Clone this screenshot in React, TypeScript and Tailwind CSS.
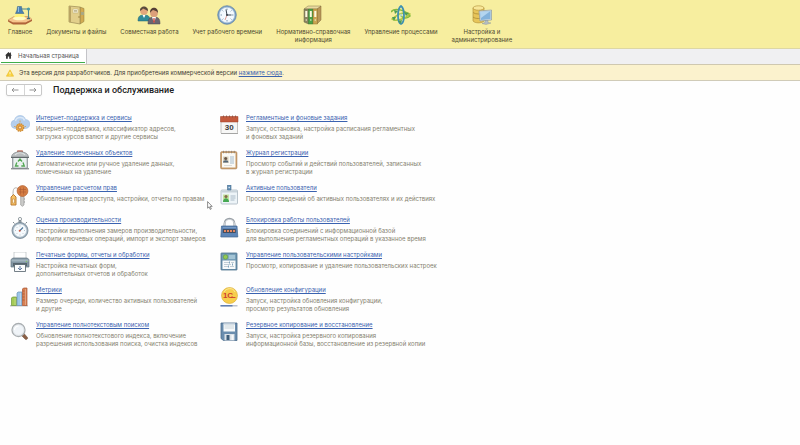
import type { ReactNode } from 'react';

const LampIcon = () => (
  <svg viewBox="0 0 24 20" className="h-5 w-6" aria-hidden="true">
    <path d="M0 15l6-3.500h15l3 3-6.500 3.500H5z" fill="#f6c58c" stroke="#b8794a" strokeWidth=".5" />
    <path d="M0 15l5 2.500h12.500l6.500-3v1.500l-6.500 3.500H5L0 16.500z" fill="#b0643a" />
    <path d="M9 8l-4 5.500h13L14 8z" fill="#fff27a" />
    <ellipse cx="11.500" cy="13.500" rx="6.500" ry="1.700" fill="#fffbc4" />
    <path d="M12 4h8.500v9" fill="none" stroke="#4c8490" strokeWidth="1.100" />
    <path d="M19 13.500h3" stroke="#4c7078" strokeWidth="1.400" />
    <circle cx="20.500" cy="4" r="1.600" fill="#4c9aa5" />
    <path d="M9.500 1.500h4L14 5l2 3.500H7.500L9 5z" fill="#4b82b3" stroke="#346189" strokeWidth=".5" />
    <path d="M10.500 2v5" stroke="#9cc4e4" strokeWidth=".9" />
  </svg>
);

const BookIcon = () => (
  <svg viewBox="0 0 20 20" className="size-5" aria-hidden="true">
    <path d="M14 2l4 1.500v13L14 19z" fill="#d2ab52" stroke="#8d7a3c" strokeWidth=".5" />
    <path d="M3 1l11 1v17L3 17z" fill="#e2cf8b" stroke="#9b8a54" strokeWidth=".7" />
    <path d="M3 1l2 .2v16L3 17z" fill="#b9a463" />
    <rect x="7" y="4" width="5" height="4" fill="#f8f3d8" stroke="#b5a56d" strokeWidth=".4" />
    <path d="M8 5.500h3M8 6.700h3" stroke="#8c8157" strokeWidth=".5" />
    <path d="M15 7h3v3h-3z" fill="#a9a882" />
    <circle cx="13" cy="12" r=".7" fill="#8c7330" />
  </svg>
);

const PeopleIcon = () => (
  <svg viewBox="0 0 24 20" className="h-5 w-6" aria-hidden="true">
    <path d="M1 16c0-5 2-6 6-6s6 1 6 6z" fill="#318b98" stroke="#206373" strokeWidth=".5" />
    <path d="M5.500 10L7 13l1.500-3z" fill="#fff" />
    <circle cx="7" cy="6" r="3.800" fill="#e3a77c" />
    <path d="M3 6c-.5-6 8.500-6 8 0C9 5 7 4 6 3.500 5 5 4 5 3 6z" fill="#5a4a3c" />
    <path d="M11 19c0-6 2-7 6-7s6 1 6 7z" fill="#6b6670" stroke="#494751" strokeWidth=".5" />
    <path d="M15 12l2 6 2-6z" fill="#fff" />
    <path d="M16.500 13h1l.4 4-.9 1-.9-1z" fill="#c43e35" />
    <circle cx="17" cy="8" r="3.900" fill="#dca07a" />
    <path d="M13 8c-.5-7 8.500-7 8 0-1-2-3-2.500-5-3-1 1-2 1-3 3z" fill="#553f35" />
  </svg>
);

const ClockIcon = () => (
  <svg viewBox="0 0 20 20" className="size-5" aria-hidden="true">
    <circle cx="10" cy="10" r="9.300" fill="#7ba1c5" stroke="#5d7fa5" strokeWidth=".7" />
    <circle cx="10" cy="10" r="7.700" fill="#f4faff" stroke="#a6c0d7" strokeWidth=".6" />
    <path d="M10 3.500v1.500M10 15v1.500M3.500 10H5M15 10h1.500M5.500 5.500l.8.8M14.500 5.500l-.8.8M5.500 14.500l.8-.8M14.500 14.500l-.8-.8" stroke="#62809b" strokeWidth=".8" />
    <path d="M9 4.500l1 5.500h4.500" fill="none" stroke="#39434e" strokeWidth="1" />
    <path d="M10 10l-2 5" stroke="#ce5a45" strokeWidth=".6" />
    <circle cx="10" cy="10" r="1" fill="#39434e" />
  </svg>
);

const BindersIcon = () => (
  <svg viewBox="0 0 20 20" className="size-5" aria-hidden="true">
    <path d="M1 4l4-3h13l-3 3z" fill="#e9d9a0" stroke="#877a4f" strokeWidth=".5" />
    <path d="M14 4l4-3v14l-4 4z" fill="#b99757" stroke="#80673a" strokeWidth=".5" />
    <path d="M1 4h4.500v15L1 17z" fill="#8b8560" stroke="#666146" strokeWidth=".5" />
    <path d="M5.500 4H10v15H5.500z" fill="#4ba246" stroke="#34732f" strokeWidth=".5" />
    <path d="M10 4h4.500v15H10z" fill="#cba552" stroke="#8d7132" strokeWidth=".5" />
    <path d="M2.300 6h2v6h-2zM6.800 6h2v6h-2zM11.300 6h2v6h-2z" fill="#fdf9e0" />
    <circle cx="3.300" cy="15" r=".8" fill="#ece9cd" />
    <circle cx="7.800" cy="15" r=".8" fill="#ece9cd" />
    <circle cx="12.300" cy="15" r=".8" fill="#ece9cd" />
  </svg>
);

const ProcessIcon = () => (
  <svg viewBox="0 0 20 20" className="size-5" fill="none" aria-hidden="true">
    <path d="M0 7c3-5 15-2 19 4-3 3-7 2-9 0" stroke="#83b93e" strokeWidth="1.500" />
    <path d="M1 14c3 3 13 0 18-5-5-3-12 0-18 5z" stroke="#a9c53d" strokeWidth="1.400" />
    <path d="M10 19c-4-2-4-15 0-18 4 3 4 16 0 18z" stroke="#3f91b2" strokeWidth="1.800" />
    <path d="M3 5l4 1-3 3zM13 7l5 1-3 3zM7 16l3 3 1-4zM1 12l4 0-2 4z" fill="#4d9d55" />
    <circle cx="10" cy="10" r="1.500" fill="#b4d7c0" />
  </svg>
);

const AdminIcon = () => (
  <svg viewBox="0 0 20 20" className="size-5" aria-hidden="true">
    <path d="M1 3v13c2 2.500 9 2.500 11 0V3z" fill="#e7c55a" stroke="#ac8c35" strokeWidth=".6" />
    <path d="M1 7.500c2 2 9 2 11 0M1 12c2 2 9 2 11 0" fill="none" stroke="#a5852e" strokeWidth=".7" />
    <ellipse cx="6.500" cy="3" rx="5.500" ry="2.200" fill="#f8e798" stroke="#ac8c35" strokeWidth=".6" />
    <path d="M7 6l12.500-1v10L8 16z" fill="#d2dce2" stroke="#7f909d" strokeWidth=".6" />
    <path d="M8 7l10.500-1v8L9 15z" fill="#83b2db" />
    <path d="M8 7l10.500-1L9 13z" fill="#b4d5ef" />
    <path d="M13 15.500h3v2l3 .5-5 1.500-4-1 3-1z" fill="#b5bec4" stroke="#818e96" strokeWidth=".4" />
  </svg>
);

const CloudIcon = () => (
  <svg viewBox="0 0 20 20" className="size-5" aria-hidden="true">
    <path d="M5 13.500a4.300 4.300 0 01-.5-8.500c1-6 10-6 11-.5a4.500 4.500 0 010 9z" fill="#b5cfed" stroke="#9dbadd" strokeWidth=".5" />
    <path d="M5.500 6c1-4.500 8-4.500 9-.5" fill="none" stroke="#dbe8f7" strokeWidth="1.400" />
    <circle cx="10" cy="12.500" r="3.700" fill="#f0ad47" stroke="#c98a3a" strokeWidth="1.300" strokeDasharray="1.500 .7" />
    <circle cx="10" cy="12.500" r="1.600" fill="#f8dfac" stroke="#b76a2b" strokeWidth=".8" />
    <path d="M10 7.500v-2M5.500 11.500H4M14.500 11.500H16" stroke="#d9a04a" strokeWidth=".8" />
  </svg>
);

const TrashIcon = () => (
  <svg viewBox="0 0 20 20" className="size-5" aria-hidden="true">
    <path d="M7.500 2V.8h5V2" fill="#cb7961" stroke="#a94f39" strokeWidth=".7" />
    <path d="M1.500 7c0-7 17-7 17 0z" fill="#b9bdbf" stroke="#787f83" strokeWidth=".6" />
    <path d="M5 5c2-3 8-3 10 0" fill="none" stroke="#e1e4e5" strokeWidth="1.200" />
    <path d="M3 7.500h14V18H3z" fill="#eaf1f0" stroke="#8b9296" strokeWidth=".6" />
    <path d="M1 7.500h18M1 18.800h18" stroke="#62696d" strokeWidth="1" />
    <path d="M2.500 8v10M17.500 8v10" stroke="#9aa2a6" strokeWidth="1" />
    <path d="M8 11.500L10 9l2 2.500M13 12.500l1.300 3.500h-3M6.800 12.500L5.500 16h3" fill="none" stroke="#52a653" strokeWidth="1.300" />
  </svg>
);

const KeyIcon = () => (
  <svg viewBox="0 0 20 22" className="h-[22px] w-5" aria-hidden="true">
    <path d="M10.700 11h3.300v9l-1.600 1.300L10.700 20z" fill="#cbcbc9" stroke="#8e8f8d" strokeWidth=".6" />
    <path d="M14 14h1M14 17h1" stroke="#8e8f8d" strokeWidth="1" />
    <path d="M8 3.500C3 1 3 6 3 10" fill="none" stroke="#a6a19a" strokeWidth=".8" />
    <circle cx="12.500" cy="6" r="5.400" fill="#d47d43" stroke="#b5602f" strokeWidth=".7" />
    <path d="M9 4.500h7M9 7h7M10.500 2.500v7M13.500 2.500v7" stroke="#ac5b30" strokeWidth=".6" />
    <path d="M1 12l2.500-2.500L6 12v8H1z" fill="#f5c268" stroke="#b77528" strokeWidth=".9" />
    <path d="M2.500 14h2v4h-2z" fill="#fff5db" stroke="#b77528" strokeWidth=".5" />
  </svg>
);

const StopwatchIcon = () => (
  <svg viewBox="0 0 20 22" className="h-[22px] w-5" aria-hidden="true">
    <circle cx="10" cy="2" r="1.600" fill="none" stroke="#8c969c" strokeWidth=".9" />
    <path d="M9 3.500h2V6H9zM3 5l1.500 1.500M17 5l-1.500 1.500" fill="#9ba6ae" stroke="#7e898f" strokeWidth="1" />
    <circle cx="10" cy="13.500" r="8" fill="#a0b2c0" stroke="#70818f" strokeWidth=".8" />
    <circle cx="10" cy="13.500" r="6.500" fill="#f6fafd" stroke="#b8c6d0" strokeWidth=".5" />
    <path d="M10 8.500v1M10 17.500v1M5 13.500h1M14 13.500h1M6.500 10l.7.7M6.500 17l.7-.7M13.500 17l-.7-.7" stroke="#879ca9" strokeWidth=".6" />
    <path d="M9.500 14l3.500-3.500" stroke="#4a7499" strokeWidth="1.100" />
    <circle cx="9.700" cy="13.800" r="1" fill="#d05a42" />
  </svg>
);

const PrinterIcon = () => (
  <svg viewBox="0 0 20 20" className="size-5" aria-hidden="true">
    <path d="M4 0h12v8H4z" fill="#fff" stroke="#adb2b6" strokeWidth=".6" />
    <path d="M1 7.500L3 6h14l2 1.500V15H1z" fill="#8497a5" stroke="#647581" strokeWidth=".7" />
    <path d="M1.500 7.500h17v2h-17z" fill="#a3b4bf" />
    <path d="M3 11h14v3H3z" fill="#56646e" />
    <path d="M4.500 12.500h11v7h-11z" fill="#fbfcfd" stroke="#52606a" strokeWidth=".8" />
    <path d="M10 14v4M8 16l2 2 2-2" fill="none" stroke="#607aa1" strokeWidth="1" />
    <circle cx="16.500" cy="9.500" r=".7" fill="#84c767" />
  </svg>
);

const MetricsIcon = () => (
  <svg viewBox="0 0 20 20" className="size-5" aria-hidden="true">
    <path d="M0 18.800h18" stroke="#a5a6a6" strokeWidth="1" />
    <path d="M1.500 11l1-1h4v8.500h-5z" fill="#a4ca54" stroke="#6e9639" strokeWidth=".7" />
    <path d="M7 6l1-1h4v13.500H7z" fill="#9dc6e7" stroke="#6b92b5" strokeWidth=".7" />
    <path d="M12.500 2l1-1H17v17.500h-4.500z" fill="#d77f51" stroke="#aa5635" strokeWidth=".7" />
    <path d="M5 11v7M10.500 6v12M15.500 2v16" stroke="#fff" strokeOpacity=".35" strokeWidth=".8" />
    <path d="M12.500 4h2M12.500 7h2M12.500 10h2M12.500 13h2" stroke="#9b4b2d" strokeWidth=".6" />
  </svg>
);

const SearchIcon = () => (
  <svg viewBox="0 0 20 20" className="size-5" aria-hidden="true">
    <path d="M12 12.500l2-1 3.500 4c.8 1-1.200 2.800-2.200 1.800L12 14z" fill="#8a5f45" stroke="#644431" strokeWidth=".5" />
    <circle cx="8.500" cy="8" r="6.500" fill="#f0f4f8" stroke="#a9aeb1" strokeWidth="1.300" />
    <path d="M4.500 8c0-2.500 2-4 4-4" fill="none" stroke="#fff" strokeWidth="1.300" />
    <circle cx="8.500" cy="8" r="5.300" fill="none" stroke="#d2d9dc" strokeWidth=".5" />
  </svg>
);

const CalendarIcon = () => (
  <svg viewBox="0 0 20 20" className="size-5" aria-hidden="true">
    <rect x="1" y="2" width="16.500" height="16.500" rx=".8" fill="#f7f7f6" stroke="#b7b5b1" strokeWidth=".8" />
    <path d="M.5 1.500h17.500v5.500H.5z" fill="#c45a3d" stroke="#a34329" strokeWidth=".5" />
    <path d="M3.500 .5v2M6.500 .5v2M9.500 .5v2M12.500 .5v2M15.500 .5v2" stroke="#8d4b3b" strokeWidth=".8" />
    <text x="9.200" y="15" textAnchor="middle" fontSize="8" fontWeight="700" fill="#3c3c3c" className="font-['Liberation_Sans',sans-serif]">30</text>
    <path d="M1 18.500h17" stroke="#a1a1a0" strokeWidth=".9" />
  </svg>
);

const JournalIcon = () => (
  <svg viewBox="0 0 20 20" className="size-5" aria-hidden="true">
    <rect x=".5" y="1.500" width="16.500" height="17.500" rx="1.500" fill="#c99e6c" stroke="#a97f54" strokeWidth=".5" />
    <path d="M2 3h13.500v14.500H2z" fill="#faf9f5" />
    <path d="M3.500 .8v2.500M6.200 .8v2.500M8.900 .8v2.500M11.600 .8v2.500M14.300 .8v2.500" stroke="#8b7c6d" strokeWidth=".8" />
    <path d="M3 6.500h5.500v6.500H3z" fill="#d8d1bd" />
    <circle cx="5.700" cy="8.500" r="1.500" fill="#695648" />
    <path d="M3 12.500c0-3 5.500-3 5.500 0z" fill="#536577" />
    <path d="M10 7h4M10 9h4M10 11h4M10 13h4" stroke="#9bb3c9" strokeWidth=".9" />
    <path d="M4 15.500h8" stroke="#c9c8c3" strokeWidth=".6" />
  </svg>
);

const BadgeIcon = () => (
  <svg viewBox="0 0 20 20" className="size-5" aria-hidden="true">
    <rect x="1" y="5" width="16.500" height="14" rx="1" fill="#edf4f8" stroke="#a9b6c0" strokeWidth=".8" />
    <path d="M1.500 5.500h15.500v2H1.500z" fill="#c8d3da" />
    <path d="M7.500 0h3.500v5H7.500z" fill="#6792b9" stroke="#456b8c" strokeWidth=".6" />
    <circle cx="9.200" cy="2.500" r=".8" fill="#d9e8f4" />
    <path d="M3 9.500h6V17H3z" fill="#c6e4a0" />
    <circle cx="6" cy="11.500" r="1.600" fill="#836c4b" />
    <path d="M3 17c0-5 6-5 6 0z" fill="#45a853" />
    <path d="M10.500 11h5M10.500 13h5M10.500 15h4" stroke="#9aacba" strokeWidth=".8" />
  </svg>
);

const LockIcon = () => (
  <svg viewBox="0 0 20 22" className="h-[22px] w-5" aria-hidden="true">
    <path d="M4.500 10V7c0-7 10-7 10 0v3" fill="none" stroke="#9aa1a7" strokeWidth="2" />
    <path d="M4.500 9V7c0-6 10-6 10 0v2" fill="none" stroke="#dde0e3" strokeWidth=".8" />
    <path d="M1.500 9h15.500l.8 11H.8z" fill="#5c84b6" stroke="#41658f" strokeWidth=".7" />
    <path d="M3 10.500h13" stroke="#7ea1c9" strokeWidth=".8" />
    <rect x="2.800" y="12" width="13" height="4" rx=".5" fill="#454f60" />
    <path d="M4 13h2v2H4zM7 13h2v2H7zM10 13h2v2h-2zM13 13h2v2h-2z" fill="#e38762" />
  </svg>
);

const SettingsIcon = () => (
  <svg viewBox="0 0 20 20" className="size-5" aria-hidden="true">
    <rect x="1" y="1" width="16" height="17" rx=".5" fill="#6b92ae" stroke="#527690" strokeWidth=".8" />
    <path d="M2.500 2.500H15.500v5H2.500z" fill="#82acc2" />
    <circle cx="5.500" cy="5" r="2.300" fill="#94c955" stroke="#57963e" strokeWidth=".6" />
    <path d="M9 4h6M9 6h6" stroke="#d5e9f2" strokeWidth=".8" />
    <path d="M2.500 8.500h13v8.500h-13z" fill="#f7fafb" />
    <path d="M4 10.500h5M11 10.500h3M4 12.500h7M4 14.500h4M10 14.500h4" stroke="#a9bac5" strokeWidth=".7" />
    <path d="M9.500 9.500v2M12.500 11.500v2M8.500 13.500v2" stroke="#618fae" strokeWidth=".8" />
  </svg>
);

const UpdateIcon = () => (
  <svg viewBox="0 0 20 20" className="size-5" aria-hidden="true">
    <circle cx="9.500" cy="8.500" r="8" fill="#f7ce4c" stroke="#d9a92f" strokeWidth=".6" />
    <path d="M4 5c2-4 9-5 11 0" fill="none" stroke="#fbe898" strokeWidth="1" />
    <text x="8" y="11" textAnchor="middle" fontSize="8" fontWeight="700" fill="#cf3f2f" className="font-['Liberation_Sans',sans-serif]">1С</text>
    <path d="M11 10.500h4.500" stroke="#cf3f2f" strokeWidth=".9" />
    <path d="M.5 18.800h17" stroke="#aeb5c5" strokeWidth="1.200" />
    <path d="M.5 18.800h12" stroke="#4a6fac" strokeWidth="1.200" />
  </svg>
);

const BackupIcon = () => (
  <svg viewBox="0 0 20 20" className="size-5" aria-hidden="true">
    <path d="M1 1h16v17.500H3.500L1 16.500z" fill="#6a8dae" stroke="#4d6d8b" strokeWidth=".8" />
    <path d="M3.500 1.500h11.500v8H3.500z" fill="#f8fafb" />
    <path d="M4.500 4h9.500M4.500 6h9.500" stroke="#b9c5cf" strokeWidth=".7" />
    <path d="M3.500 1.500h11.500v1.200H3.500z" fill="#c6d3dd" />
    <path d="M4.500 12h10v6.500h-10z" fill="#dbe2e8" />
    <path d="M6.500 13h3v5h-3z" fill="#3f5e7a" />
    <path d="M11.500 13h2v5h-2z" fill="#f7f9fa" />
  </svg>
);

interface Section {
  icon: ReactNode;
  lines: string[];
}

interface ServiceItem {
  icon: ReactNode;
  title: string;
  lines: string[];
}

const sections: Section[] = [
  { icon: <LampIcon />, lines: ['Главное'] },
  { icon: <BookIcon />, lines: ['Документы и файлы'] },
  { icon: <PeopleIcon />, lines: ['Совместная работа'] },
  { icon: <ClockIcon />, lines: ['Учет рабочего времени'] },
  { icon: <BindersIcon />, lines: ['Нормативно-справочная', 'информация'] },
  { icon: <ProcessIcon />, lines: ['Управление процессами'] },
  { icon: <AdminIcon />, lines: ['Настройка и', 'администрирование'] },
];

const services: ServiceItem[] = [
  {
    icon: <CloudIcon />,
    title: 'Интернет-поддержка и сервисы',
    lines: ['Интернет-поддержка, классификатор адресов,', 'загрузка курсов валют и другие сервисы'],
  },
  {
    icon: <CalendarIcon />,
    title: 'Регламентные и фоновые задания',
    lines: ['Запуск, остановка, настройка расписания регламентных', 'и фоновых заданий'],
  },
  {
    icon: <TrashIcon />,
    title: 'Удаление помеченных объектов',
    lines: ['Автоматическое или ручное удаление данных,', 'помеченных на удаление'],
  },
  {
    icon: <JournalIcon />,
    title: 'Журнал регистрации',
    lines: ['Просмотр событий и действий пользователей, записанных', 'в журнал регистрации'],
  },
  {
    icon: <KeyIcon />,
    title: 'Управление расчетом прав',
    lines: ['Обновление прав доступа, настройки, отчеты по правам'],
  },
  {
    icon: <BadgeIcon />,
    title: 'Активные пользователи',
    lines: ['Просмотр сведений об активных пользователях и их действиях'],
  },
  {
    icon: <StopwatchIcon />,
    title: 'Оценка производительности',
    lines: ['Настройки выполнения замеров производительности,', 'профили ключевых операций, импорт и экспорт замеров'],
  },
  {
    icon: <LockIcon />,
    title: 'Блокировка работы пользователей',
    lines: ['Блокировка соединений с информационной базой', 'для выполнения регламентных операций в указанное время'],
  },
  {
    icon: <PrinterIcon />,
    title: 'Печатные формы, отчеты и обработки',
    lines: ['Настройка печатных форм,', 'дополнительных отчетов и обработок'],
  },
  {
    icon: <SettingsIcon />,
    title: 'Управление пользовательскими настройками',
    lines: ['Просмотр, копирование и удаление пользовательских настроек'],
  },
  {
    icon: <MetricsIcon />,
    title: 'Метрики',
    lines: ['Размер очереди, количество активных пользователей', 'и другие'],
  },
  {
    icon: <UpdateIcon />,
    title: 'Обновление конфигурации',
    lines: ['Запуск, настройка обновления конфигурации,', 'просмотр результатов обновления'],
  },
  {
    icon: <SearchIcon />,
    title: 'Управление полнотекстовым поиском',
    lines: ['Обновление полнотекстового индекса, включение', 'разрешения использования поиска, очистка индексов'],
  },
  {
    icon: <BackupIcon />,
    title: 'Резервное копирование и восстановление',
    lines: ['Запуск, настройка резервного копирования', 'информационной базы, восстановление из резервной копии'],
  },
];

const SectionsPanel = () => (
  <nav className="flex min-h-[49px] items-start gap-[14px] border-b border-[#ddd7a4] bg-[#f7ee9f] pt-[5px] pl-2">
    {sections.map((section) => (
      <a
        key={section.lines[0]}
        href="#"
        className="flex flex-col items-center text-center text-[6px] leading-[8px] whitespace-nowrap text-[#4d4930]"
      >
        <span className="mb-[3px] flex h-5 items-center justify-center">{section.icon}</span>
        {section.lines.map((line) => (
          <span key={line}>{line}</span>
        ))}
      </a>
    ))}
  </nav>
);

const Tabs = () => (
  <div className="flex h-4 border-b border-[#cfc8b0] bg-[#f0f0f2]">
    <a href="#" className="flex items-start border-r border-[#c4c4c8] bg-white px-px">
      <span className="flex h-[14px] items-center gap-[6px] border-b border-[#3fae49] pr-[6px] pl-1">
        <svg viewBox="0 0 8 8" className="size-[7px]" aria-hidden="true">
          <path d="M4 0L0 4h1.200v3.700h2V5h1.600v2.700h2V4H8L6.800 2.800V.7h-1v1.100z" fill="#333" />
        </svg>
        <span className="text-[6px] leading-[8px] text-[#555]">Начальная страница</span>
      </span>
    </a>
  </div>
);

const Warning = () => (
  <div className="flex h-4 items-center gap-[5px] border-b border-[#d0cbb8] bg-[#fbf2cd] pl-[6px] text-[6px] leading-[8px] text-[#3f3d34]">
    <svg viewBox="0 0 8 8" className="size-2" aria-hidden="true">
      <path d="M4 .8L7.600 7.200H.4z" fill="#f9d33c" stroke="#e9b92b" strokeWidth=".6" strokeLinejoin="round" />
      <path d="M4 3v2M4 5.700v.8" stroke="#fff" strokeWidth=".8" />
    </svg>
    <p>
      Эта версия для разработчиков. Для приобретения коммерческой версии{' '}
      <a href="#" className="text-[#3a62b0] underline">нажмите сюда</a>.
    </p>
  </div>
);

const HistoryButtons = () => (
  <div className="flex h-3 w-9 divide-x divide-[#d5d5d5] rounded-xs border border-[#c9c9c9] bg-white shadow-xs">
    <button type="button" aria-label="Назад" className="flex flex-1 items-center justify-center">
      <svg viewBox="0 0 8 6" className="h-[6px] w-2" fill="none" stroke="#8a8a8a" strokeWidth=".9">
        <path d="M7.500 3H1M3 1L1 3l2 2" />
      </svg>
    </button>
    <button type="button" aria-label="Вперед" className="flex flex-1 items-center justify-center">
      <svg viewBox="0 0 8 6" className="h-[6px] w-2" fill="none" stroke="#8a8a8a" strokeWidth=".9">
        <path d="M.5 3H7M5 1l2 2-2 2" />
      </svg>
    </button>
  </div>
);

const ServiceEntry = ({ icon, title, lines }: ServiceItem) => (
  <div className="flex min-h-[25px] items-start gap-[6px]">
    <span className="flex w-5 shrink-0 justify-center pt-[2px]">{icon}</span>
    <div className="text-[6px] whitespace-nowrap">
      <a href="#" className="block leading-[10px] text-[#3a62b0] underline">{title}</a>
      <p className="mt-[2px] leading-[8px] text-[#85816f]">
        {lines.map((line) => (
          <span key={line} className="block">{line}</span>
        ))}
      </p>
    </div>
  </div>
);

const Cursor = () => (
  <svg viewBox="0 0 6 9" className="pointer-events-none absolute top-[201px] left-[207px] h-[9px] w-[6px]" aria-hidden="true">
    <path d="M.6.6v6.600l1.500-1.400 1.100 2.600 1.100-.5-1.100-2.500h2z" fill="#fff" stroke="#444" strokeWidth=".6" />
  </svg>
);

export default function App() {
  return (
    <div className="relative min-h-screen bg-[#fefefe] font-[Inter,'Liberation_Sans',sans-serif]">
      <SectionsPanel />
      <Tabs />
      <Warning />
      <main>
        <header className="flex items-center gap-[11px] pt-[3px] pl-[6px]">
          <HistoryButtons />
          <h1 className="font-[Roboto,'Liberation_Sans',sans-serif] text-[9px] leading-[12px] font-medium text-[#222]">
            Поддержка и обслуживание
          </h1>
        </header>
        <div className="mt-[17px] grid grid-cols-[210px_1fr] gap-y-[7px] pl-[10px]">
          {services.map((item) => (
            <ServiceEntry key={item.title} {...item} />
          ))}
        </div>
      </main>
      <Cursor />
    </div>
  );
}
